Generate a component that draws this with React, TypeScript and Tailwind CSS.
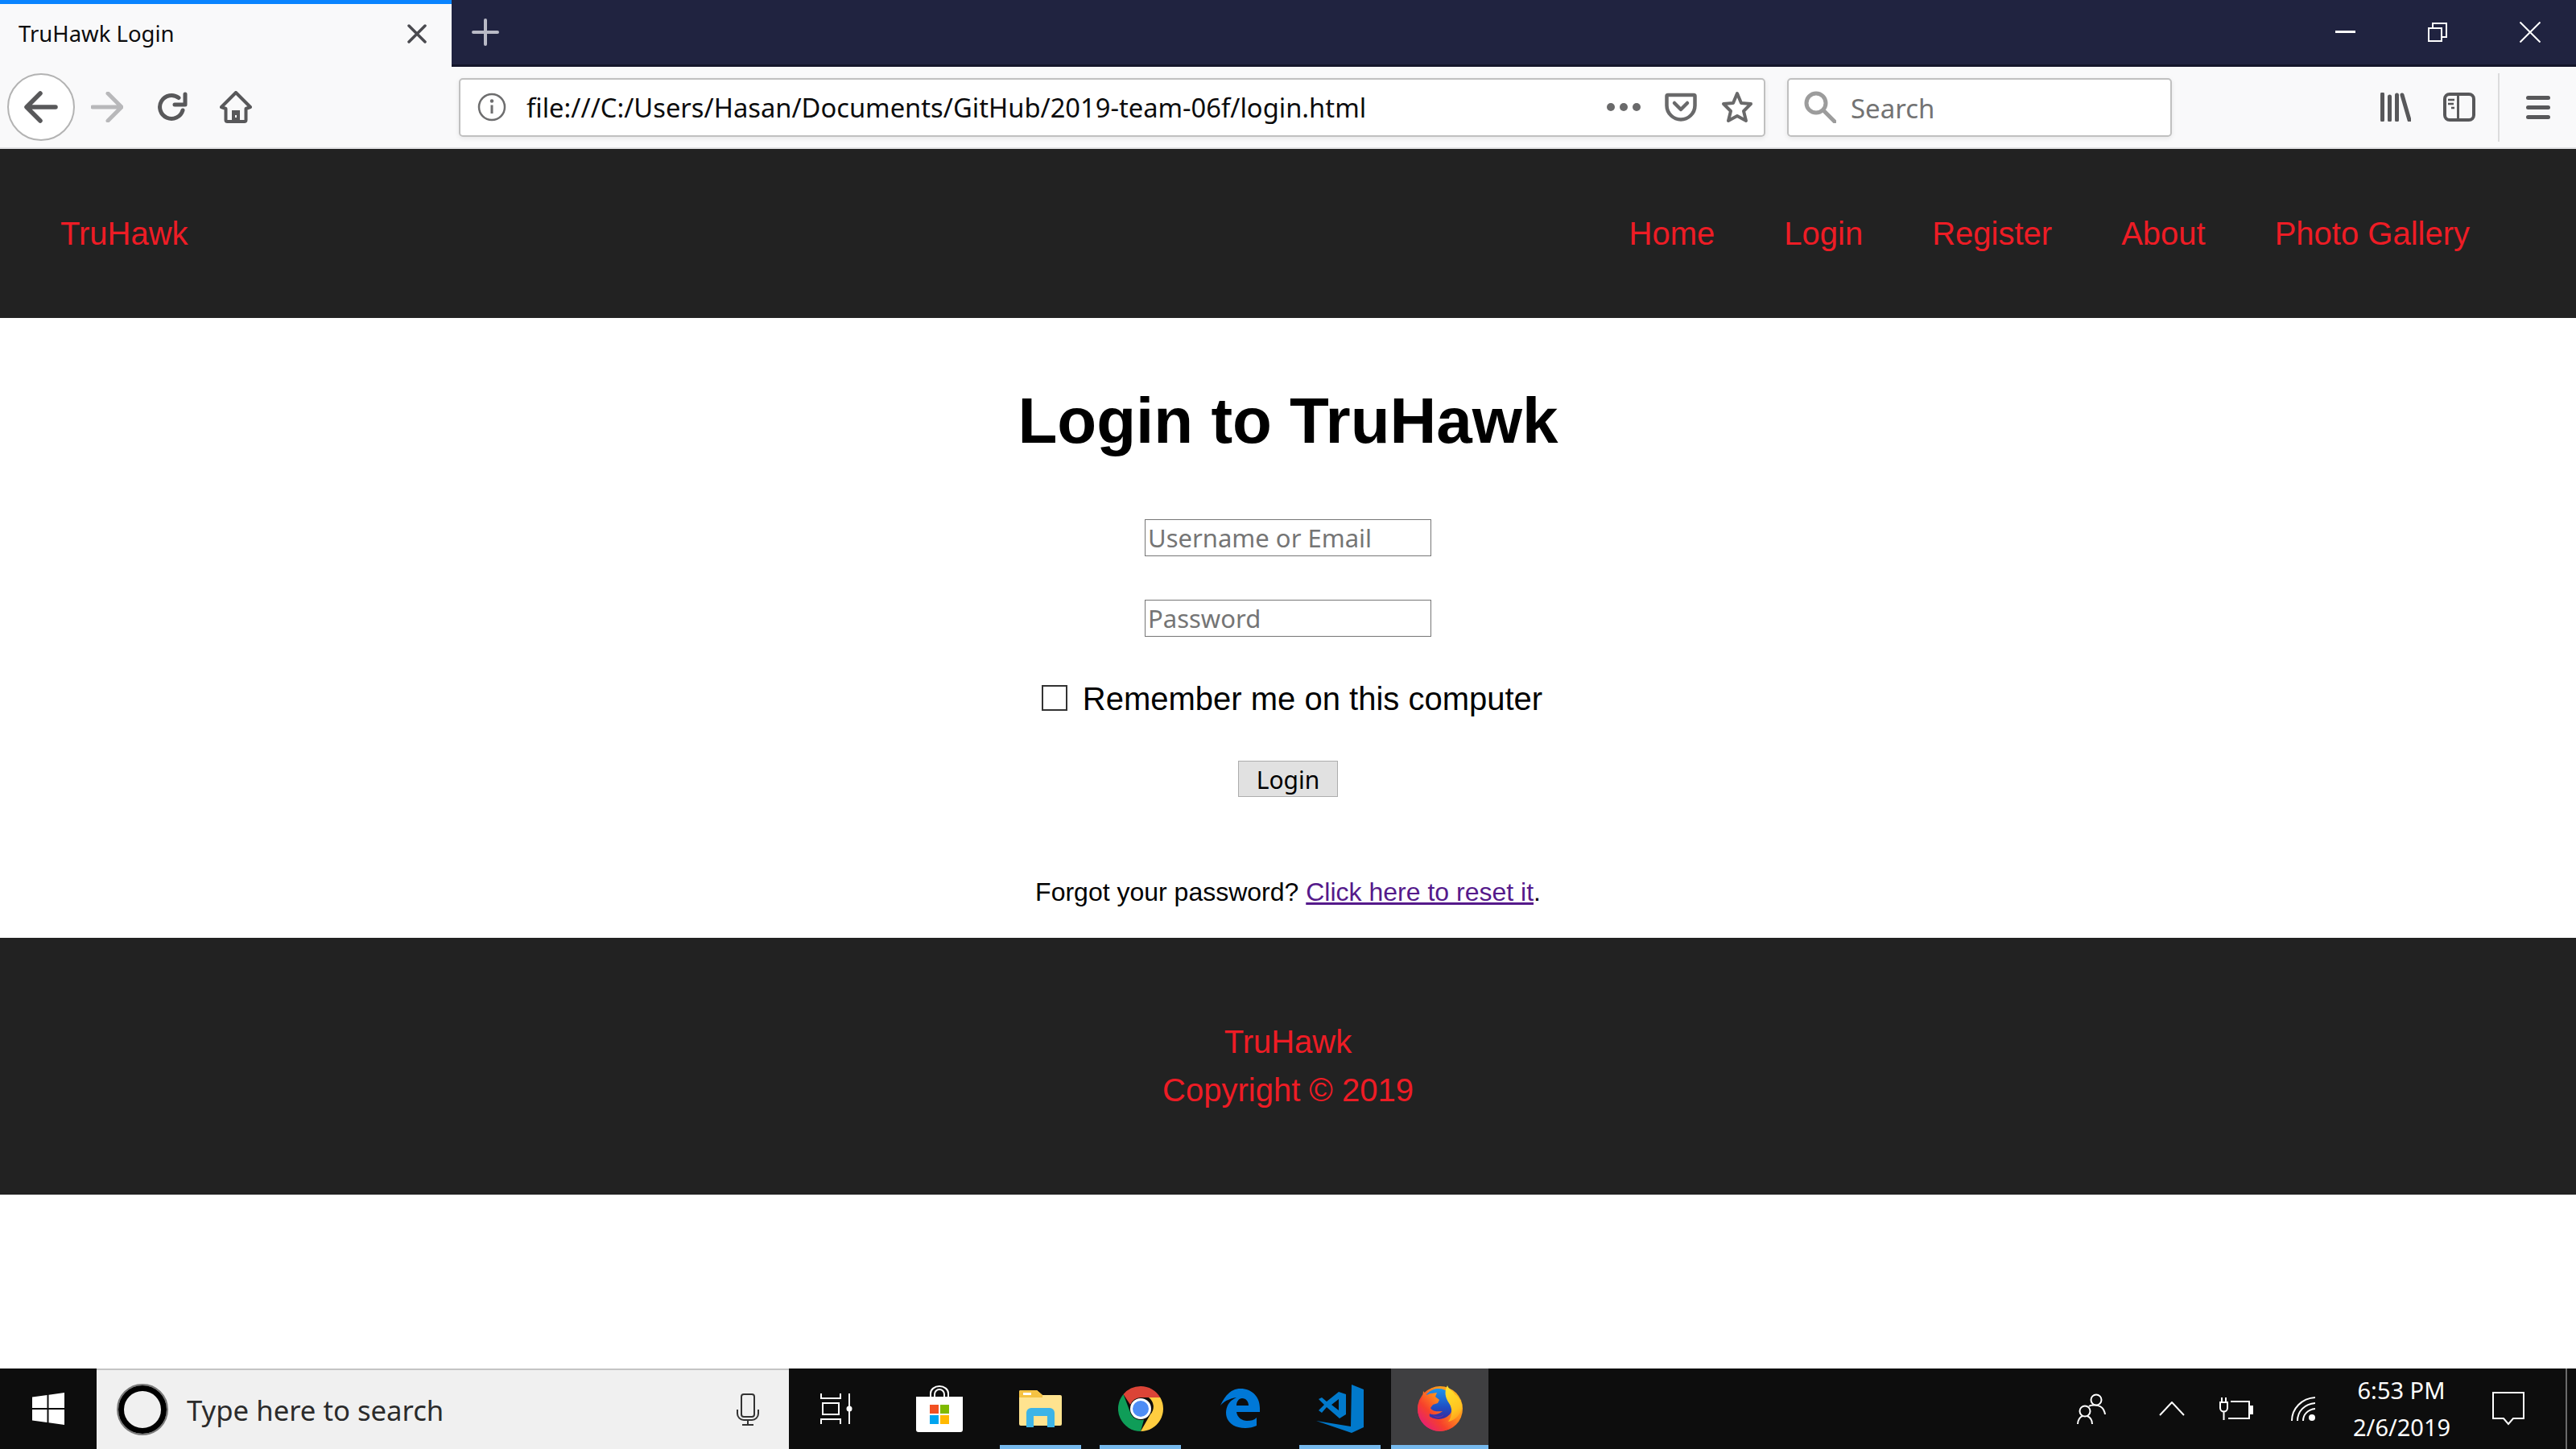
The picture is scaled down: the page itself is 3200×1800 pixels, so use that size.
const uiFont = "font-['Noto_Sans',sans-serif]";
const pageFont = "font-['Liberation_Sans',Arial,sans-serif]";

function Ico({ w, h, vb, className = "", children }: { w: number; h: number; vb?: string; className?: string; children: React.ReactNode }) {
  return (
    <svg width={w} height={h} viewBox={vb ?? `0 0 ${w} ${h}`} fill="none" className={`shrink-0 ${className}`}>
      {children}
    </svg>
  );
}

function TabBar() {
  return (
    <div className="flex h-[83px] bg-[#202340] border-b-[3px] border-[#14162b]">
      <div className={`${uiFont} w-[561px] h-[83px] bg-[#f9f9fa] border-t-[5px] border-[#0a84ff] flex items-center pl-[23px] pr-[31px] justify-between`}>
        <span className="text-[27.5px] leading-none text-[#0c0c0d] pb-[4px]">TruHawk Login</span>
        <Ico w={24} h={24} className="mb-[4px]">
          <path d="M2 2 22 22M22 2 2 22" stroke="#4a4a4f" strokeWidth="3.5" strokeLinecap="round" />
        </Ico>
      </div>
      <div className="ml-[25px] mt-[23px]">
        <Ico w={34} h={34}>
          <path d="M17 2V32M2 17H32" stroke="#b9bac6" strokeWidth="4" strokeLinecap="round" />
        </Ico>
      </div>
      <div className="ml-auto flex items-start">
        <div className="w-[25px] h-[3px] bg-white mt-[38px] mr-[90px]" />
        <Ico w={24} h={24} className="mt-[28px] mr-[90px]">
          <path d="M1 7H17V23H1ZM6 7V1H23V18H17" stroke="#fff" strokeWidth="2" />
        </Ico>
        <Ico w={26} h={26} className="mt-[27px] mr-[44px]">
          <path d="M0.5 0.5 25.5 25.5M25.5 0.5 0.5 25.5" stroke="#fff" strokeWidth="2" />
        </Ico>
      </div>
    </div>
  );
}

function Toolbar() {
  return (
    <div className={`${uiFont} flex items-center h-[102px] bg-[#f9f9fa] border-b-[2px] border-[#e1e1e3]`}>
      <div className="ml-[9px] w-[84px] h-[84px] rounded-full bg-white border-2 border-[#b3b3b3] flex items-center justify-center">
        <Ico w={42} h={40}>
          <path d="M20 3 3 20 20 37M4 20H39" stroke="#58585a" strokeWidth="5.5" strokeLinecap="round" strokeLinejoin="round" />
        </Ico>
      </div>
      <Ico w={40} h={38} className="ml-[20px]">
        <path d="M21 2 38 19 21 36M2 19H36" stroke="#b8b8ba" strokeWidth="5" strokeLinecap="round" strokeLinejoin="round" />
      </Ico>
      <Ico w={38} h={38} className="ml-[42px]">
        <path d="M32 23A14.5 14.5 0 1 1 27 7.500" stroke="#58585a" strokeWidth="5" strokeLinecap="round" />
        <path d="M35 3V16H22" stroke="#58585a" strokeWidth="5" strokeLinecap="round" strokeLinejoin="round" />
      </Ico>
      <Ico w={40} h={40} className="ml-[40px]">
        <path d="M20 2 38 20 32.500 22V36A2 2 0 0 1 30.500 38H9.500A2 2 0 0 1 7.500 36V22L2 20Z" stroke="#58585a" strokeWidth="4" strokeLinejoin="round" />
        <path d="M15 38V24H25V38Z" fill="#58585a" />
        <rect x="19" y="30" width="2" height="3" fill="#f9f9fa" />
      </Ico>

      <div className="ml-[257px] w-[1623px] h-[73px] bg-white border-2 border-[#c0c0c0] rounded-[5px] shadow-[0_2px_6px_rgba(0,0,0,0.08)] flex items-center pl-[21px] pr-[13px]">
        <Ico w={36} h={36}>
          <circle cx="18" cy="18" r="16" stroke="#6d6d6e" strokeWidth="2.500" />
          <circle cx="18" cy="10.500" r="2.200" fill="#6d6d6e" />
          <path d="M18 15.500V26" stroke="#6d6d6e" strokeWidth="3" />
        </Ico>
        <span className="ml-[25px] pt-[2px] text-[32.7px] leading-none text-[#0c0c0d] whitespace-nowrap">file:///C:/Users/Hasan/Documents/GitHub/2019-team-06f/login.html</span>
        <div className="ml-auto flex items-center gap-[30px]">
          <div className="flex gap-[6px]">
            <span className="w-[10px] h-[10px] rounded-full bg-[#6a6a6b]" />
            <span className="w-[10px] h-[10px] rounded-full bg-[#6a6a6b]" />
            <span className="w-[10px] h-[10px] rounded-full bg-[#6a6a6b]" />
          </div>
          <Ico w={40} h={36}>
            <path d="M4 3H36A1.500 1.500 0 0 1 37.500 4.500V16C37.500 26 29 33.500 20 33.500S2.500 26 2.500 16V4.500A1.500 1.500 0 0 1 4 3Z" stroke="#69696a" strokeWidth="4.500" />
            <path d="M12 13 20 21 28 13" stroke="#69696a" strokeWidth="4.500" strokeLinecap="round" strokeLinejoin="round" />
          </Ico>
          <Ico w={40} h={40}>
            <path d="M20 3 25 15 37 16 28 25 31 37 20 31 9 37 12 25 3 16 15 15Z" stroke="#69696a" strokeWidth="4" strokeLinejoin="round" />
          </Ico>
        </div>
      </div>

      <div className="ml-[27px] w-[478px] h-[73px] bg-white border-2 border-[#c0c0c0] rounded-[5px] shadow-[0_2px_6px_rgba(0,0,0,0.08)] flex items-center pl-[19px]">
        <Ico w={40} h={40}>
          <circle cx="15" cy="15" r="12" stroke="#9c9c9c" strokeWidth="5" />
          <path d="M24 24 38 38" stroke="#9c9c9c" strokeWidth="5" strokeLinecap="round" />
        </Ico>
        <span className="ml-[18px] pt-[2px] text-[33px] leading-none text-[#737373]">Search</span>
      </div>

      <Ico w={38} h={36} className="ml-[259px]">
        <path d="M2.500 2V34M11.500 5V34M20.500 3V34M27 3 36 34" stroke="#58585a" strokeWidth="5" strokeLinecap="round" />
      </Ico>
      <Ico w={40} h={36} className="ml-[40px]">
        <rect x="2" y="2" width="36" height="32" rx="6" stroke="#58585a" strokeWidth="4" />
        <path d="M18.500 2V34" stroke="#58585a" strokeWidth="3" />
        <path d="M6 9H14M6 14H13M10 19H14" stroke="#58585a" strokeWidth="2.500" />
      </Ico>
      <div className="ml-[28px] w-[2px] h-[85px] bg-[#dcdcdd]" />
      <div className="ml-[33px] w-[30px] flex flex-col gap-[7px]">
        <span className="h-[5px] rounded-full bg-[#58585a]" />
        <span className="h-[5px] rounded-full bg-[#58585a]" />
        <span className="h-[5px] rounded-full bg-[#58585a]" />
      </div>
    </div>
  );
}

function SiteNav() {
  const links = ["Home", "Login", "Register", "About", "Photo Gallery"];
  return (
    <nav className={`${pageFont} h-[210px] bg-[#222222] flex items-center justify-between pl-[75px] pr-[132px] text-[40px] text-[#ee1c25]`}>
      <a href="#" className="leading-none">TruHawk</a>
      <div className="flex gap-[86px]">
        {links.map(l => (
          <a key={l} href="#" className="leading-none">{l}</a>
        ))}
      </div>
    </nav>
  );
}

function LoginForm() {
  const inputCls =
    "block w-[356px] h-[46px] px-[3px] bg-white border border-[#767676] text-[31px] font-['Noto_Sans',sans-serif] placeholder:text-[#757575] outline-none";
  return (
    <main className={`${pageFont} h-[770px] flex flex-col items-center bg-white text-black`}>
      <h1 className="mt-[82px] text-[80px] leading-[92px] font-bold">Login to TruHawk</h1>
      <input className={`mt-[76px] ${inputCls}`} placeholder="Username or Email" />
      <input className={`mt-[54px] ${inputCls}`} placeholder="Password" />
      <label className="mt-[54px] flex items-center h-[46px] pl-[10px] text-[40px] leading-none">
        <span className="w-[32px] h-[32px] mb-[3px] border-2 border-[#333333] bg-white" />
        <span className="ml-[19px]">Remember me on this computer</span>
      </label>
      <button className="mt-[54px] w-[124px] h-[45px] pt-[2px] bg-[#e1e1e1] border border-[#adadad] text-[30px] leading-none font-['Noto_Sans',sans-serif]">
        Login
      </button>
      <p className="mt-[100px] text-[32px] leading-[36px]">
        Forgot your password? <a href="#" className="text-[#551a8b] underline">Click here to reset it</a>.
      </p>
    </main>
  );
}

function SiteFooter() {
  return (
    <footer className={`${pageFont} h-[319px] bg-[#222222] text-[#ee1c25] text-[40px] leading-[60px] text-center pt-[99px]`}>
      <div>TruHawk</div>
      <div>Copyright © 2019</div>
    </footer>
  );
}

function AppIcons() {
  return (
    <div className="flex items-center h-[100px]">
      <div className="w-[118px] h-[100px] flex items-center justify-center gap-[6px]">
        <Ico w={26} h={38}>
          <path d="M1 0V6H25V0M1 38V32H25V38M3 12H23V26H3Z" stroke="#fff" strokeWidth="2" />
        </Ico>
        <Ico w={8} h={38}>
          <path d="M4 0V38" stroke="#fff" strokeWidth="2" />
          <circle cx="4" cy="19" r="3.500" fill="#fff" />
        </Ico>
      </div>
      <div className="w-[118px] h-[100px] ml-[10px] flex items-center justify-center">
        <Ico w={58} h={58}>
          <path d="M18 14V10A11 9 0 0 1 40 10V14M23 14V11A6 6 0 0 1 35 11V14" stroke="#fff" strokeWidth="2" />
          <path d="M0 14H58V55A3 3 0 0 1 55 58H3A3 3 0 0 1 0 55Z" fill="#fff" />
          <rect x="17" y="24" width="11" height="11" fill="#f25022" />
          <rect x="30" y="24" width="11" height="11" fill="#7fba00" />
          <rect x="17" y="37" width="11" height="11" fill="#00a4ef" />
          <rect x="30" y="37" width="11" height="11" fill="#ffb900" />
        </Ico>
      </div>
      <div className="w-[101px] h-[100px] ml-[16px] pt-[4px] flex items-center justify-center border-b-[5px] border-[#76b9ed]">
        <Ico w={53} h={46}>
          <path d="M0 2A2 2 0 0 1 2 0H22L29 6H51A2 2 0 0 1 53 8V42A2 2 0 0 1 51 44H2A2 2 0 0 1 0 42Z" fill="#ffe38f" />
          <path d="M0 2A2 2 0 0 1 2 0H22L29 6V9H0Z" fill="#f5c242" />
          <rect x="5" y="3" width="10" height="3" fill="#fff" />
          <path d="M9 46V28A6 6 0 0 1 15 22H38A6 6 0 0 1 44 28V46H35V32H18V46Z" fill="#3cb4e7" />
        </Ico>
      </div>
      <div className="w-[101px] h-[100px] ml-[23px] pt-[5px] flex items-center justify-center border-b-[5px] border-[#76b9ed]">
        <Ico w={56} h={56}>
          <path d="M28 0A28 28 0 0 1 52.250 14H28A14 14 0 0 0 15 23L6.500 10A28 28 0 0 1 28 0Z" fill="#db4437" />
          <path d="M52.250 14A28 28 0 0 1 28 56L40 35A14 14 0 0 0 38 14Z" fill="#ffcd40" />
          <path d="M28 56A28 28 0 0 1 6.500 10L16 35A14 14 0 0 0 32 41.500Z" fill="#0f9d58" />
          <circle cx="28" cy="28" r="13" fill="#fff" />
          <circle cx="28" cy="28" r="10" fill="#4e8df5" />
        </Ico>
      </div>
      <div className="w-[147px] h-[100px] flex items-center justify-center">
        <Ico w={50} h={50} vb="15 14 50 50">
          <path
            fillRule="evenodd"
            d="M15 35C22 20 30 14 40 14C54 14 64 24 64 38V43H35C36 50 42 54 48 54C53 54 57 53 60 50V60C56 62 51 63 46 63C31 63 22 55 22 44C22 36 26 29 35 25C28 26 20 29 15 35ZM35 35H50C50 30 47 26 42 26C38 26 35 30 35 35Z"
            fill="#0078d7"
          />
        </Ico>
      </div>
      <div className="w-[101px] h-[100px] pt-[5px] flex items-center justify-center border-b-[5px] border-[#76b9ed]">
        <Ico w={60} h={60} vb="15 10 60 60">
          <path d="M59 10 74 16V63L59 70 15 55 58 62Z" fill="#0179cb" />
          <path
            fillRule="evenodd"
            d="M18 28 22 26 28 31 43 19 52 22V47L44 52 28 38 22 45 18 42 25 35ZM43 28V42L34 35Z"
            fill="#0179cb"
          />
        </Ico>
      </div>
      <div className="w-[121px] h-[100px] ml-[13px] pt-[3px] flex items-center justify-center bg-[#3f3f41] border-b-[5px] border-[#76b9ed]">
        <Ico w={56} h={58}>
          <defs>
            <linearGradient id="ffdisc" x1="0.1" y1="0.9" x2="0.9" y2="0.2">
              <stop offset="0" stopColor="#e3197e" />
              <stop offset="0.35" stopColor="#f6402c" />
              <stop offset="0.7" stopColor="#ff8a1e" />
              <stop offset="1" stopColor="#ffb31f" />
            </linearGradient>
            <linearGradient id="ffglobe" x1="0.5" y1="0" x2="0.5" y2="1">
              <stop offset="0" stopColor="#1b94ec" />
              <stop offset="0.6" stopColor="#1f4fc4" />
              <stop offset="1" stopColor="#3b2a9c" />
            </linearGradient>
            <linearGradient id="ffflame" x1="0.3" y1="0" x2="0.6" y2="1">
              <stop offset="0" stopColor="#ffe22e" />
              <stop offset="0.7" stopColor="#ffc41f" />
              <stop offset="1" stopColor="#ff9a1f" />
            </linearGradient>
          </defs>
          <circle cx="28" cy="30" r="28" fill="url(#ffdisc)" />
          <circle cx="26" cy="24" r="19" fill="url(#ffglobe)" />
          <path d="M6 17 7 8 11 13 16 11 24 10 22 15 27 19 25 23 19 25 16 29C18 33 24 34 31 33 25 38 18 38 15 36 13 46 24 50 34 46 42 42 44 30 40 22L55 28C55 44 43 58 28 58 12 58 0 45 0 30 0 25 3 20 6 17Z" fill="url(#ffdisc)" />
          <path d="M18 37C23 41 29 40 33 37 30 42 23 43 18 37Z" fill="#6b2fa0" />
          <path d="M37 1C39 7 45 8 46 12 52 15 56 24 55 30 52 40 44 45 38 46 43 40 44 30 39 23 34 16 33 8 37 1Z" fill="url(#ffflame)" />
        </Ico>
      </div>
    </div>
  );
}

function Taskbar() {
  return (
    <div className={`${uiFont} h-[100px] flex items-center bg-[#0d0d0d] text-white`}>
      <div className="w-[120px] flex justify-center">
        <Ico w={40} h={40}>
          <path d="M0 5.500 18.500 3V19H0ZM20.500 2.700 40 0V19H20.500ZM0 21H18.500V37L0 34.500ZM20.500 21H40V40L20.500 37.300Z" fill="#fff" />
        </Ico>
      </div>
      <div className="w-[860px] h-[100px] flex items-center bg-[#f0f0f0] border-t-2 border-[#c4c4c4] pl-[25px] pr-[37px]">
        <span className="w-[64px] h-[64px] rounded-full bg-white border-[2px] border-[#7a7a7a] flex items-center justify-center">
          <span className="block w-[60px] h-[60px] rounded-full border-[7px] border-black bg-[#f0f0f0]" />
        </span>
        <span className="ml-[23px] pt-[2px] text-[34.7px] leading-none text-[#2b2b2b]">Type here to search</span>
        <Ico w={28} h={40} className="ml-auto">
          <rect x="6" y="1" width="16" height="28" rx="3" stroke="#333" strokeWidth="2" />
          <path d="M1 20V25A8 8 0 0 0 9 33H19A8 8 0 0 0 27 25V20M14 33V38M7 39H21" stroke="#333" strokeWidth="2" />
        </Ico>
      </div>
      <AppIcons />
      <div className="ml-auto flex items-center h-[100px]">
        <Ico w={36} h={40}>
          <circle cx="24" cy="9" r="6.500" stroke="#fff" strokeWidth="2" />
          <circle cx="10" cy="23" r="6.500" stroke="#fff" strokeWidth="2" />
          <path d="M15 17C17 15 29 14 33 21 34 23 35 25 35 27M1 39C1 34 4 30 7 29M13 29C17 31 19 35 19 39" stroke="#fff" strokeWidth="2" />
        </Ico>
        <Ico w={32} h={18} className="ml-[66px]">
          <path d="M1 17 16 1 31 17" stroke="#fff" strokeWidth="2" />
        </Ico>
        <Ico w={42} h={28} className="ml-[43px]">
          <path d="M14 5H37V26H11" stroke="#fff" strokeWidth="2" />
          <rect x="38" y="10" width="4" height="11" fill="#fff" />
          <path d="M3 0V6M8 0V6M1 6H10V13A4.500 4.500 0 0 1 1 13ZM5.500 18V28" stroke="#fff" strokeWidth="2" />
        </Ico>
        <Ico w={30} h={30} className="ml-[47px]">
          <path d="M1 30C1 15 13 2 30 1M8 30C8 18 17 9 30 8M15 30C15 22 21 16 30 15" stroke="#fff" strokeWidth="2" />
          <circle cx="26" cy="26" r="4" fill="#fff" />
        </Ico>
        <div className="ml-[47px] w-[120px] text-center text-[29px] leading-[46px] whitespace-nowrap">
          <div>6:53 PM</div>
          <div>2/6/2019</div>
        </div>
        <Ico w={40} h={42} className="ml-[53px]">
          <path d="M1 1H39V33H26L20 40 14 33H1Z" stroke="#fff" strokeWidth="2" />
        </Ico>
        <div className="ml-[51px] w-[2px] h-[100px] bg-[#6a6a6a] mr-[11px]" />
      </div>
    </div>
  );
}

export default function App() {
  return (
    <div className="w-[3200px] h-[1800px] flex flex-col overflow-hidden bg-white">
      <TabBar />
      <Toolbar />
      <SiteNav />
      <LoginForm />
      <SiteFooter />
      <div className="flex-1 bg-white" />
      <Taskbar />
    </div>
  );
}
